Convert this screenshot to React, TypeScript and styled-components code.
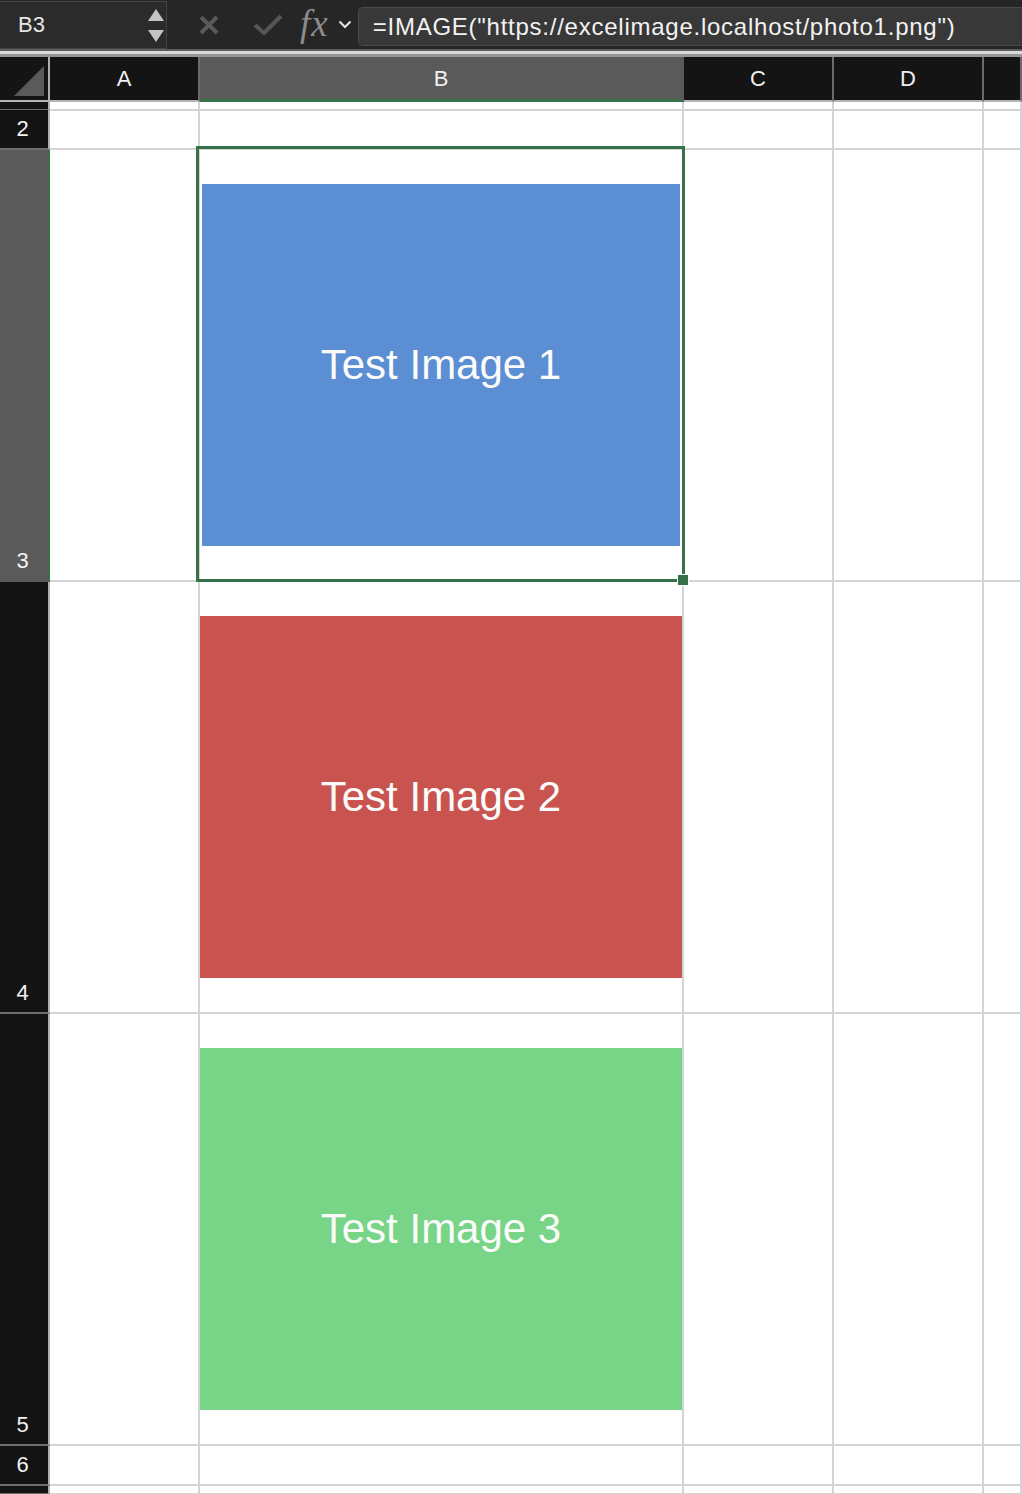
import styled, { createGlobalStyle } from 'styled-components';

const GREEN = '#37714a';
const GRID = '#d4d4d4';

const GlobalStyle = createGlobalStyle`
	body {
		margin: 0;
		background: #ffffff;
		font-family: 'Liberation Sans', Arial, sans-serif;
	}
`;

const Page = styled.div`
	width: 1022px;
	height: 1494px;
	overflow: hidden;
	background: #ffffff;
`;

const FormulaBar = styled.div`
	height: 49px;
	background: #262626;
	display: flex;
	align-items: center;
`;

const NameBox = styled.div`
	box-sizing: border-box;
	width: 167px;
	height: 48px;
	margin-top: 1px;
	background: #2b2b2b;
	border: 1px solid #444444;
	border-left: none;
	display: flex;
	align-items: center;
	justify-content: space-between;
	padding: 0 2px 0 18px;
	color: #e6e6e6;
	font-size: 22px;
`;

const Stepper = styled.div`
	display: flex;
	flex-direction: column;
	gap: 9px;
`;

const Tools = styled.div`
	display: flex;
	align-items: center;
	height: 100%;
	padding-left: 31px;
`;

const ToolIcon = styled.span<{ $gap: number }>`
	display: flex;
	align-items: center;
	margin-right: ${p => p.$gap}px;
`;

const Fx = styled.span`
	font-family: 'Liberation Serif', 'Times New Roman', serif;
	font-style: italic;
	font-size: 37px;
	line-height: 37px;
	letter-spacing: 1px;
	color: #8c8c8c;
	margin: -3px 9px 0 0;
`;

const FormulaInput = styled.div`
	box-sizing: border-box;
	flex: 1;
	height: 39px;
	margin-left: 6px;
	margin-top: 4px;
	background: #383838;
	border: 1px solid #4a4a4a;
	border-right: none;
	border-radius: 5px 0 0 5px;
	display: flex;
	align-items: center;
	padding-left: 14px;
	color: #f2f2f2;
	font-size: 24px;
	letter-spacing: 0.75px;
	white-space: nowrap;
	overflow: hidden;
`;

const Separator = styled.div`
	height: 3px;
	background: #d9d9d9;
	border-top: 2px solid #5c5c5c;
	border-bottom: 3px solid #969696;
`;

const COLS = '50px 150px 484px 150px 150px 1fr';

const HeaderRow = styled.div`
	display: grid;
	grid-template-columns: ${COLS};
	height: 45px;
`;

const Corner = styled.div`
	box-sizing: border-box;
	background: #141414;
	border-right: 2px solid #b0b0b0;
	border-bottom: 2px solid #b5b5b5;
	display: flex;
	align-items: flex-end;
	justify-content: flex-end;
	padding: 0 4px 4px 0;
`;

const ColHeader = styled.div<{ $selected?: boolean }>`
	box-sizing: border-box;
	background: ${p => (p.$selected ? '#5a5a5a' : '#141414')};
	border-right: 2px solid ${p => (p.$selected ? '#5a5a5a' : '#6b6b6b')};
	border-bottom: ${p => (p.$selected ? `3px solid ${GREEN}` : '2px solid #b5b5b5')};
	color: #f0f0f0;
	font-size: 22px;
	display: flex;
	align-items: center;
	justify-content: center;
	padding-top: ${p => (p.$selected ? '1px' : '0')};
`;

const SheetRow = styled.div<{ $height: number }>`
	display: grid;
	grid-template-columns: ${COLS};
	height: ${p => p.$height}px;
`;

const RowHeader = styled.div<{ $selected?: boolean }>`
	box-sizing: border-box;
	background: ${p => (p.$selected ? '#5a5a5a' : '#141414')};
	border-right: 2px solid ${p => (p.$selected ? GREEN : '#b0b0b0')};
	border-bottom: 2px solid ${p => (p.$selected ? '#5a5a5a' : '#6e6e6e')};
	color: #f2f2f2;
	font-size: 22px;
	line-height: 24px;
	display: flex;
	align-items: flex-end;
	justify-content: center;
	padding: 0 3px 7px 0;
	overflow: hidden;
`;

const Cell = styled.div`
	box-sizing: border-box;
	position: relative;
	border-right: 2px solid ${GRID};
	border-bottom: 2px solid ${GRID};
	display: flex;
	align-items: center;
	justify-content: center;
`;

const Picture = styled.div<{ $color: string; $inset: number }>`
	width: calc(100% - ${p => p.$inset * 2}px);
	height: 362px;
	background: ${p => p.$color};
	display: flex;
	align-items: center;
	justify-content: center;
	color: #fbfbfb;
	font-size: 42px;
`;

const Selection = styled.div`
	position: absolute;
	z-index: 2;
	top: -4px;
	left: -4px;
	right: -3px;
	bottom: -2px;
	border: 3px solid ${GREEN};
	pointer-events: none;
`;

const FillHandle = styled.div`
	position: absolute;
	right: -7px;
	bottom: -7px;
	width: 10px;
	height: 10px;
	background: ${GREEN};
	border: 1px solid #ffffff;
`;

const columns = ['A', 'B', 'C', 'D', ''];

const images: Record<number, { color: string; label: string }> = {
	3: { color: '#5b8ed3', label: 'Test Image 1' },
	4: { color: '#c9544f', label: 'Test Image 2' },
	5: { color: '#78d486', label: 'Test Image 3' },
};

// the first and last rows are only slivers at the edges of the view
const rows = [
	{ num: 1, height: 8, label: false },
	{ num: 2, height: 40, label: true },
	{ num: 3, height: 432, label: true },
	{ num: 4, height: 432, label: true },
	{ num: 5, height: 432, label: true },
	{ num: 6, height: 40, label: true },
	{ num: 7, height: 8, label: false },
];

function App() {
	return (
		<Page>
			<GlobalStyle />
			<FormulaBar>
				<NameBox>
					B3
					<Stepper>
						<svg width='16' height='12' viewBox='0 0 16 12'>
							<path d='M8 0 L16 12 L0 12 Z' fill='#c4c4c4' />
						</svg>
						<svg width='16' height='12' viewBox='0 0 16 12'>
							<path d='M0 0 L16 0 L8 12 Z' fill='#c4c4c4' />
						</svg>
					</Stepper>
				</NameBox>
				<Tools>
					<ToolIcon $gap={33}>
						<svg width='22' height='22' viewBox='0 0 22 22'>
							<path d='M3 3 L19 19 M19 3 L3 19' stroke='#595959' strokeWidth='4' />
						</svg>
					</ToolIcon>
					<ToolIcon $gap={17}>
						<svg width='30' height='22' viewBox='0 0 30 22'>
							<path
								d='M2 11 L11 19 L28 2'
								stroke='#555555'
								strokeWidth='4'
								fill='none'
								strokeLinejoin='round'
							/>
						</svg>
					</ToolIcon>
					<Fx>fx</Fx>
					<svg width='14' height='9' viewBox='0 0 14 9'>
						<path d='M1.5 1.5 L7 7 L12.5 1.5' stroke='#e2e2e2' strokeWidth='2.2' fill='none' />
					</svg>
				</Tools>
				<FormulaInput>=IMAGE("https://excelimage.localhost/photo1.png")</FormulaInput>
			</FormulaBar>
			<Separator />
			<HeaderRow>
				<Corner>
					<svg width='30' height='30' viewBox='0 0 30 30'>
						<path d='M30 0 L30 30 L0 30 Z' fill='#5a5a5a' />
					</svg>
				</Corner>
				{columns.map((col, i) => (
					<ColHeader key={i} $selected={col === 'B'}>
						{col}
					</ColHeader>
				))}
			</HeaderRow>
			{rows.map(row => {
				const image = images[row.num];
				const selected = row.num === 3;
				return (
					<SheetRow key={row.num} $height={row.height}>
						<RowHeader $selected={selected}>{row.label ? row.num : ''}</RowHeader>
						{columns.map((col, i) => (
							<Cell key={i}>
								{col === 'B' && image && (
									<Picture $color={image.color} $inset={selected ? 2 : 0}>
										{image.label}
									</Picture>
								)}
								{col === 'B' && selected && (
									<Selection>
										<FillHandle />
									</Selection>
								)}
							</Cell>
						))}
					</SheetRow>
				);
			})}
		</Page>
	);
}

export default App;
